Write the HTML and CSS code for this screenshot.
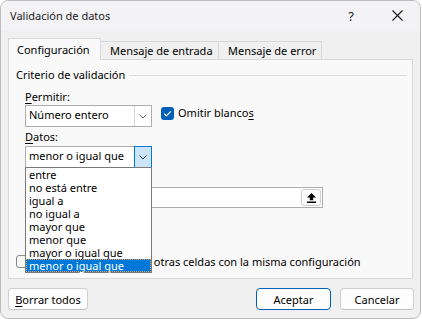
FILE: index.html
```html
<!DOCTYPE html>
<html>
<head>
    <title>Validación de datos</title>
    <link rel="stylesheet" href="styles.css">
</head>
<body>
    <div class="dialog">
        <div class="titlebar">
            <span class="title">Validación de datos</span>
            <span class="tb-btn">?</span>
            <span class="tb-btn">
                <svg width="11" height="11" viewBox="0 0 11 11"><path d="M0.5 0.5 L10.5 10.5 M10.5 0.5 L0.5 10.5" stroke="#1a1a1a" stroke-width="1.1" fill="none"/></svg>
            </span>
        </div>

        <div class="tabs">
            <div class="tab active">Configuración</div>
            <div class="tab tab-entrada">Mensaje de entrada</div>
            <div class="tab tab-error">Mensaje de error</div>
        </div>

        <div class="panel">
            <div class="group-title">
                <span>Criterio de validación</span>
                <span class="group-line"></span>
            </div>

            <div class="fields">
                <div class="label label-first"><u>P</u>ermitir:</div>
                <div class="row">
                    <div class="combo">
                        <span class="combo-text">Número entero</span>
                        <span class="combo-btn">
                            <svg width="8" height="5" viewBox="0 0 8 5"><path d="M0.5 0.5 L4 4 L7.5 0.5" stroke="#6a6a6a" fill="none"/></svg>
                        </span>
                    </div>
                    <div class="check">
                        <span class="box checked">
                            <svg width="13" height="13" viewBox="0 0 13 13"><path d="M3.2 6.6 L5.4 8.8 L9.8 4.4" stroke="#fff" stroke-width="1.2" fill="none"/></svg>
                        </span>
                        <span>Omitir blanco<u>s</u></span>
                    </div>
                </div>

                <div class="label label-datos"><u>D</u>atos:</div>
                <div class="combo-wrap">
                    <div class="combo open">
                        <span class="combo-text">menor o igual que</span>
                        <span class="combo-btn">
                            <svg width="8" height="5" viewBox="0 0 8 5"><path d="M0.5 0.5 L4 4 L7.5 0.5" stroke="#3a3a3a" fill="none"/></svg>
                        </span>
                    </div>
                    <ul class="listbox">
                        <li>entre</li>
                        <li>no está entre</li>
                        <li>igual a</li>
                        <li>no igual a</li>
                        <li>mayor que</li>
                        <li>menor que</li>
                        <li>mayor o igual que</li>
                        <li class="selected">menor o igual que</li>
                    </ul>
                </div>

                <div class="label label-max">Máximo:</div>
                <div class="ref-input">
                    <span class="ref-text"></span>
                    <span class="ref-btn">
                        <svg width="9" height="10" viewBox="0 0 9 10"><path d="M4.5 0 L9 4.5 H6.2 V7.2 H2.8 V4.5 H0 Z" fill="#000"/><rect x="0" y="8.5" width="9" height="1.5" fill="#000"/></svg>
                    </span>
                </div>
            </div>

            <div class="check apply">
                <span class="box"></span>
                <span><span class="apply-lead">Aplicar estos cambios a</span> otras celdas con la misma configuración</span>
            </div>
        </div>

        <div class="buttons">
            <button class="btn btn-clear"><u>B</u>orrar todos</button>
            <span class="spacer"></span>
            <button class="btn btn-default">Aceptar</button>
            <button class="btn btn-cancel">Cancelar</button>
        </div>
    </div>
</body>
</html>
```

FILE: styles.css
```css
* { box-sizing: border-box; }
body { margin: 0; background: #fff; font-family: "Noto Sans", sans-serif; font-size: 11px; line-height: 16px; color: #000; }
u { text-underline-offset: 2px; }

.dialog { width: 421px; height: 319px; border: 1px solid #bcbcbc; border-radius: 8px; background: #f0f0f0; overflow: hidden; }

.titlebar { height: 30px; display: flex; align-items: center; background: #f3f3f5; padding-bottom: 1px; }
.title { flex: 1; padding-left: 9px; color: #1a1a1a; }
.tb-btn { width: 46px; height: 29px; display: flex; align-items: center; justify-content: center; font-size: 13px; color: #1a1a1a; }

.tabs { height: 28px; display: flex; align-items: flex-end; padding-left: 7px; }
.tab { height: 18px; padding: 1px 0 0 8px; border: 1px solid #d9d9d9; border-bottom: none; background: #f0f0f0; white-space: nowrap; }
.tab.active { height: 22px; width: 93px; padding-top: 3px; margin-bottom: -1px; background: #f9f9f9; position: relative; z-index: 1; }
.tab-entrada { width: 119px; margin-left: -1px; padding-left: 9px; }
.tab-error { width: 104px; margin-left: -1px; padding-left: 9px; }

.panel { margin-left: 7px; width: 405px; height: 220px; border: 1px solid #d9d9d9; background: #f9f9f9; padding: 7px 0 0 7px; }

.group-title { display: flex; align-items: center; height: 16px; }
.group-line { flex: 1; height: 1px; background: #dcdcdc; margin: 0 5px 0 4px; }

.fields { margin-left: 9px; }
.label { height: 16px; }
.label-first { margin-top: 6px; }
.label-datos { margin-top: 2px; margin-bottom: 1px; }
.label-max { margin-top: 2px; margin-bottom: 1px; }

.row { display: flex; align-items: flex-start; }

.combo { width: 127px; height: 22px; display: flex; border: 1px solid #adadad; background: #fff; }
.combo-text { flex: 1; padding: 1px 0 0 3px; white-space: nowrap; }
.combo-btn { width: 17px; border-left: 1px solid #d9d9d9; display: flex; align-items: center; justify-content: center; }
.combo.open .combo-btn { width: 18px; margin: -1px -1px -1px 0; border: 1px solid #0078d4; background: #cce4f7; }

.check { display: flex; align-items: flex-start; margin-left: 9px; }
.box { width: 13px; height: 13px; margin: 2px 4px 0 0; border: 1px solid #8a8a8a; border-radius: 3px; background: #f6f6f6; display: flex; }
.box.checked { border: none; background: #005fb8; }

.combo-wrap { position: relative; width: 127px; }
.listbox { position: absolute; top: 21px; left: 0; z-index: 10; width: 127px; margin: 0; padding: 0; list-style: none; border: 1px solid #7a7a7a; background: #fff; }
.listbox li { height: 13px; line-height: 13px; padding-left: 3px; white-space: nowrap; }
.listbox li.selected { background: #0078d7; color: #fff; outline: 1px dotted #e3a35a; outline-offset: -1px; }

.ref-input { width: 298px; height: 21px; display: flex; align-items: center; border: 1px solid #adadad; background: #fff; padding-right: 1px; }
.ref-text { flex: 1; }
.ref-btn { width: 20px; height: 17px; border: 1px solid #cfcfcf; border-radius: 3px; background: #fdfdfd; display: flex; align-items: center; justify-content: center; }

.apply { margin: 46px 0 0 0; }
.apply .box { margin: 1px 5px 0 0; }
.apply-lead { letter-spacing: -0.17px; }

.buttons { display: flex; padding: 9px 6px 0 7px; }
.spacer { flex: 1; }
.btn { height: 22px; padding: 0; border: 1px solid #d0d0d0; border-bottom-color: #c2c2c2; border-radius: 4px; background: #fdfdfd; font-family: "Noto Sans", sans-serif; font-size: 11px; color: #000; }
.btn-clear { width: 80px; }
.btn-default { width: 75px; border-color: #005fb8; margin-right: 9px; }
.btn-cancel { width: 74px; }
```
